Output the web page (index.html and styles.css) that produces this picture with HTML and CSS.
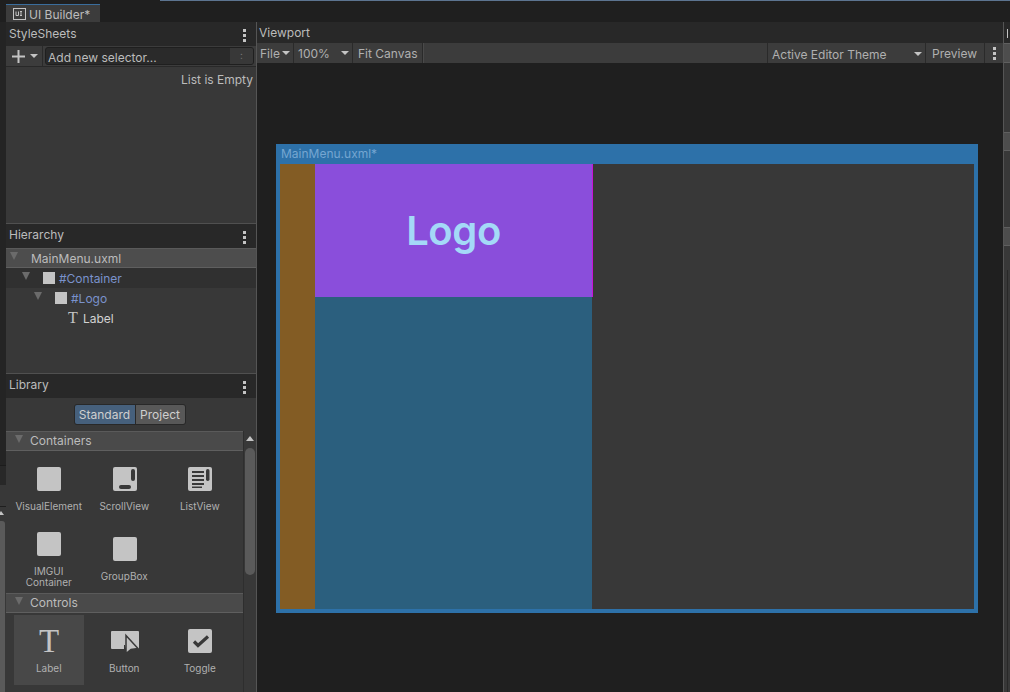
FILE: index.html
```html
<!DOCTYPE html>
<html lang="en">
<head>
<meta charset="utf-8">
<title>UI Builder</title>
<link rel="stylesheet" href="styles.css">
</head>
<body>
<div class="app">
  <div class="titlebar">
    <div class="tab">
      <svg class="tab-icon" width="13" height="12" viewBox="0 0 13 12"><rect x="0.5" y="0.5" width="12" height="11" fill="none" stroke="#c4c4c4"/><path d="M3 3.500V7.500H5.500V3.500M8 3.500V7.500M7 3.500H9M7 7.500H9" fill="none" stroke="#c4c4c4"/></svg>
      <span>UI Builder*</span>
    </div>
    <div class="top-line"></div>
  </div>
  <div class="main">
    <div class="strip">
      <div class="strip-a"></div>
      <div class="strip-b"></div>
      <div class="strip-c"></div>
      <div class="strip-d"><span class="strip-arrow"></span><span class="strip-thumb"></span></div>
    </div>
    <div class="left">
      <div class="panel-head">
        <span>StyleSheets</span>
        <svg class="kebab" width="3" height="13" viewBox="0 0 3 13"><path d="M0 0h3v3H0zM0 5h3v3H0zM0 10h3v3H0z" fill="#c4c4c4"/></svg>
      </div>
      <div class="sheet-bar">
        <div class="add-btn">
          <svg width="13" height="13" viewBox="0 0 13 13"><path d="M5.500 0h2v5.500H13v2H7.500V13h-2V7.500H0v-2h5.500z" fill="#c4c4c4"/></svg>
          <span class="caret"></span>
        </div>
        <div class="selector">
          <span class="selector-text">Add new selector...</span>
          <span class="selector-end">:</span>
        </div>
      </div>
      <div class="sheet-body"><span>List is Empty</span></div>

      <div class="panel-head panel-head-line">
        <span>Hierarchy</span>
        <svg class="kebab" width="3" height="13" viewBox="0 0 3 13"><path d="M0 0h3v3H0zM0 5h3v3H0zM0 10h3v3H0z" fill="#c4c4c4"/></svg>
      </div>
      <div class="tree">
        <div class="tree-root"><span class="tri tri-root"></span><span class="root-name">MainMenu.uxml</span></div>
        <div class="tree-row tree-row-dark tree-l1"><span class="tri"></span><span class="sq"></span><span class="sel-name">#Container</span></div>
        <div class="tree-row tree-l2"><span class="tri"></span><span class="sq"></span><span class="sel-name">#Logo</span></div>
        <div class="tree-row tree-l3"><span class="t-small">T</span><span class="label-name">Label</span></div>
      </div>

      <div class="panel-head panel-head-line">
        <span>Library</span>
        <svg class="kebab" width="3" height="13" viewBox="0 0 3 13"><path d="M0 0h3v3H0zM0 5h3v3H0zM0 10h3v3H0z" fill="#c4c4c4"/></svg>
      </div>
      <div class="lib-tabs">
        <div class="seg">
          <span class="seg-on">Standard</span>
          <span class="seg-off">Project</span>
        </div>
      </div>
      <div class="lib-scroll">
        <div class="lib-content">
          <div class="cat"><span class="tri tri-cat"></span><span>Containers</span></div>
          <div class="grid">
            <div class="item"><svg class="ico" width="24" height="24" viewBox="0 0 24 24"><rect width="24" height="24" rx="2" fill="#c4c4c4"/></svg><span class="cap">VisualElement</span></div>
            <div class="item"><svg class="ico" width="24" height="24" viewBox="0 0 24 24"><rect width="24" height="24" rx="2" fill="#c4c4c4"/><rect x="18" y="2" width="4" height="12" rx="2" fill="#383838"/><rect x="6" y="18" width="12" height="4" rx="2" fill="#383838"/></svg><span class="cap">ScrollView</span></div>
            <div class="item"><svg class="ico" width="24" height="24" viewBox="0 0 24 24"><rect width="24" height="24" rx="2" fill="#c4c4c4"/><path d="M4 4h12v2H4zM4 8h12v2H4zM4 12h12v2H4zM4 16h12v2H4zM4 19.500h10v1.500H4z" fill="#383838"/><rect x="18" y="2" width="3.500" height="12" rx="1.700" fill="#383838"/></svg><span class="cap">ListView</span></div>
            <div class="item"><svg class="ico" width="24" height="24" viewBox="0 0 24 24"><rect width="24" height="24" rx="2" fill="#c4c4c4"/></svg><span class="cap">IMGUI<br>Container</span></div>
            <div class="item"><svg class="ico" width="24" height="24" viewBox="0 0 24 24"><rect width="24" height="24" rx="2" fill="#c4c4c4"/></svg><span class="cap">GroupBox</span></div>
          </div>
          <div class="cat"><span class="tri tri-cat"></span><span>Controls</span></div>
          <div class="grid">
            <div class="item item-on"><span class="t-big">T</span><span class="cap">Label</span></div>
            <div class="item"><svg class="ico" width="28" height="24" viewBox="0 0 28 24"><path d="M1 2h26a1 1 0 0 1 1 1v17h-13l-1-4-1 0v4H1a1 1 0 0 1-1-1V3a1 1 0 0 1 1-1z" fill="#c4c4c4"/><path d="M15 6.500 27 19.500l-7 1-5 4z" fill="#c4c4c4" stroke="#383838" stroke-width="1.500"/></svg><span class="cap">Button</span></div>
            <div class="item"><svg class="ico" width="24" height="24" viewBox="0 0 24 24"><rect width="24" height="24" rx="2" fill="#c4c4c4"/><path d="M6 12.500 10 16.500 20 7.500" fill="none" stroke="#383838" stroke-width="3.200"/></svg><span class="cap">Toggle</span></div>
          </div>
        </div>
        <div class="scrollbar">
          <span class="scroll-up"></span>
          <span class="scroll-thumb"></span>
        </div>
      </div>
    </div>
    <div class="viewport">
      <div class="view-head">Viewport</div>
      <div class="view-bar">
        <div class="btn btn-file"><span>File</span><span class="caret"></span></div>
        <div class="btn btn-zoom"><span>100%</span><span class="caret"></span></div>
        <div class="btn btn-fit">Fit Canvas</div>
        <div class="bar-fill"></div>
        <div class="btn btn-theme"><span>Active Editor Theme</span><span class="caret"></span></div>
        <div class="btn btn-preview">Preview</div>
        <div class="btn btn-more">
          <svg width="3" height="13" viewBox="0 0 3 13"><path d="M0 0h3v3H0zM0 5h3v3H0zM0 10h3v3H0z" fill="#c4c4c4"/></svg>
        </div>
      </div>
      <div class="canvas">
        <div class="doc">
          <div class="doc-title">MainMenu.uxml*</div>
          <div class="doc-body">
            <div class="col-brown"></div>
            <div class="col-blue">
              <div class="logo">Logo</div>
            </div>
          </div>
        </div>
      </div>
    </div>
    <div class="right">
      <div class="right-head"><span class="right-i"></span></div>
      <div class="right-sec right-sec-a"></div>
      <div class="right-body right-body-a"></div>
      <div class="right-sec"></div>
      <div class="right-body right-body-b"></div>
      <div class="right-sec"></div>
      <div class="right-body right-body-c"><span class="right-inner"></span></div>
    </div>
  </div>
</div>
</body>
</html>
```

FILE: styles.css
```css
* { box-sizing: border-box; }
html, body { margin: 0; padding: 0; }
body {
  width: 1010px;
  height: 692px;
  overflow: hidden;
  background: #1f1f1f;
  font-family: Inter, "Liberation Sans", sans-serif;
  font-size: 12px;
  color: #bcbcbc;
}
.app { width: 1010px; height: 692px; display: flex; flex-direction: column; }

.titlebar { height: 22px; flex: none; display: flex; background: #1f1f1f; position: relative; }
.tab {
  margin: 4px 0 0 6px;
  width: 94px;
  height: 18px;
  background: #3c3c3c;
  border-top: 1px solid #3a6d9c;
  display: flex;
  align-items: center;
  padding: 2px 0 0 7px;
  gap: 3px;
}
.tab-icon { flex: none; margin-top: -1px; }
.top-line { position: absolute; left: 160px; right: 0; top: 0; height: 1px; background: #5c7490; }

.main { flex: 1; display: flex; min-height: 0; }

.strip { width: 6px; flex: none; display: flex; flex-direction: column; background: #252525; }
.strip-a { height: 443px; flex: none; background: #242424; }
.strip-b { height: 20px; flex: none; background: #282828; border-top: 1px solid #1c1c1c; }
.strip-c { height: 21px; flex: none; background: #383838; }
.strip-d { flex: 1; background: #383838; border-top: 1px solid #1f1f1f; display: flex; flex-direction: column; }
.strip-arrow { width: 0; height: 0; margin: 4px 0 0 -2px; border: 3px solid transparent; border-top: 0; border-bottom: 4px solid #c4c4c4; }
.strip-thumb { flex: 1; margin-top: 6px; width: 5px; background: #5a5a5a; border-radius: 0 3px 0 0; }

.left { width: 250px; flex: none; display: flex; flex-direction: column; background: #383838; }
.panel-head {
  height: 24px;
  flex: none;
  display: flex;
  align-items: center;
  justify-content: space-between;
  padding: 0 10px 2px 3px;
  background: #282828;
}
.panel-head-line { height: 25px; border-top: 1px solid #505050; padding-bottom: 3px; }
.kebab { flex: none; margin-top: 5px; }

.sheet-bar { height: 21px; flex: none; display: flex; background: #3c3c3c; border-bottom: 1px solid #282828; }
.add-btn { width: 37px; flex: none; display: flex; align-items: center; gap: 5px; padding-left: 6px; border-right: 1px solid #2a2a2a; }
.caret { width: 0; height: 0; flex: none; border: 4px solid transparent; border-bottom: 0; border-top: 4px solid #c4c4c4; }
.selector {
  flex: 1;
  margin: 1px 2px 1px 2px;
  border: 1px solid #1f1f1f;
  border-radius: 3px;
  background: #2a2a2a;
  display: flex;
  align-items: center;
  justify-content: space-between;
  padding-left: 2px;
  overflow: hidden;
}
.selector-text { margin-top: 2px; }
.selector-end { width: 23px; height: 100%; background: #383838; color: #777; font-size: 10px; text-align: center; line-height: 15px; }
.sheet-body { height: 156px; flex: none; text-align: right; padding: 6px 3px 0 0; background: #383838; }
.sheet-body span { display: block; line-height: 14px; }

.tree { height: 125px; flex: none; background: #383838; }
.tree-root {
  height: 20px;
  display: flex;
  align-items: center;
  background: #4d4d4d;
  border-top: 1px solid #5a5a5a;
  border-bottom: 1px solid #5f5f5f;
}
.tri { width: 0; height: 0; flex: none; border-style: solid; border-color: #6b6b6b transparent transparent; border-width: 8px 4.500px 0; }
.tri-root { margin: -4px 0 0 4px; }
.root-name { margin-left: 13px; }
.tree-row { height: 20px; display: flex; align-items: center; }
.tree-row-dark { background: #303030; }
.tree-row .tri { margin-top: -4px; }
.tree-l1 { padding-left: 16px; }
.tree-l2 { padding-left: 28px; }
.tree-l3 { padding-left: 62px; }
.sq { width: 12px; height: 12px; flex: none; background: #c4c4c4; margin-left: 13px; }
.sel-name { margin-left: 4px; color: #7a92cc; }
.t-small { font-family: "Liberation Serif", serif; font-size: 16px; color: #c4c4c4; width: 15px; line-height: 20px; }
.label-name { color: #d2d2d2; }

.lib-tabs { height: 33px; flex: none; display: flex; justify-content: center; align-items: center; background: #383838; padding-right: 3px; }
.seg { display: flex; height: 21px; border: 1px solid #282828; border-radius: 3px; overflow: hidden; line-height: 19px; background: #282828; }
.seg-on { width: 60px; background: #46607c; color: #cfcfcf; text-align: center; }
.seg-off { width: 49px; margin-left: 1px; background: #585858; color: #cfcfcf; text-align: center; }

.lib-scroll { flex: 1; min-height: 0; display: flex; overflow: hidden; }
.lib-content { width: 237px; flex: none; }
.cat {
  height: 20px;
  display: flex;
  align-items: center;
  gap: 7px;
  padding: 0 0 2px 9px;
  background: #4a4a4a;
  border-top: 1px solid #5a5a5a;
  border-bottom: 1px solid #5f5f5f;
}
.tri-cat { margin-top: -2px; }
.grid { display: grid; grid-template-columns: 70px 70px 70px; column-gap: 5.5px; grid-auto-rows: 70px; padding: 2px 0 0 8px; }
.item { display: flex; flex-direction: column; align-items: center; justify-content: center; gap: 10px; padding-top: 3px; }
.item-on { background: #484848; }
.ico { flex: none; }
.cap { font-size: 10px; line-height: 11px; text-align: center; color: #b0b0b0; margin-left: -0.5px; }
.t-big { font-family: "Liberation Serif", serif; font-size: 33px; line-height: 24px; height: 24px; color: #c4c4c4; }

.scrollbar { width: 13px; flex: none; display: flex; flex-direction: column; align-items: center; border-left: 1px solid #2e2e2e; padding-top: 5px; }
.scroll-up { width: 0; height: 0; border: 4px solid transparent; border-top: 0; border-bottom: 5px solid #c4c4c4; }
.scroll-thumb { width: 10px; height: 127px; margin-top: 7px; background: #5a5a5a; border-radius: 5px; }

.viewport { width: 748px; flex: none; display: flex; flex-direction: column; border-left: 1px solid #555; border-right: 1px solid #555; background: #1f1f1f; }
.view-head { height: 21px; flex: none; background: #282828; padding: 4px 0 0 2px; line-height: 14px; }
.view-bar { height: 20px; flex: none; display: flex; background: #3c3c3c; color: #b0b0b0; }
.btn { height: 20px; display: flex; align-items: center; flex: none; background: #3c3c3c; border-right: 1px solid #2a2a2a; }
.btn-file { width: 37px; padding-left: 3px; gap: 2px; }
.btn-zoom { width: 59px; padding: 0 3px 0 4px; justify-content: space-between; }
.btn-fit { width: 70px; padding-left: 5px; }
.bar-fill { flex: 1; border-left: 1px solid #4a4a4a; border-right: 1px solid #2a2a2a; }
.btn-theme { width: 158px; padding: 2px 3px 0 4px; justify-content: space-between; }
.btn-preview { width: 59px; padding-left: 6px; }
.btn-more { width: 18px; justify-content: center; border-right: 0; }

.canvas { flex: 1; min-height: 0; padding: 81px 0 0 19px; }
.doc { width: 702px; height: 469px; background: #2d71a9; padding: 0 4px 4px; display: flex; flex-direction: column; }
.doc-title { height: 20px; flex: none; color: #75a6d1; padding: 3px 0 0 1px; line-height: 14px; }
.doc-body { flex: 1; display: flex; background: #383838; min-height: 0; }
.col-brown { width: 35px; flex: none; background: #835c24; }
.col-blue { width: 277px; flex: none; background: #2b5f7e; }
.logo {
  width: 278px;
  height: 133px;
  background: #8a4edb;
  border-right: 1px solid #c814d8;
  display: flex;
  align-items: center;
  justify-content: center;
  font-size: 40px;
  font-weight: 600;
  letter-spacing: -0.4px;
  color: #a4d9f7;
}

.right { flex: 1; min-width: 0; display: flex; flex-direction: column; background: #383838; }
.right-head { height: 21px; flex: none; background: #282828; padding: 7px 0 0 3px; }
.right-i { display: block; width: 1px; height: 9px; background: #c4c4c4; }
.right-sec { height: 19px; flex: none; background: #4d4d4d; border-top: 1px solid #5f5f5f; border-bottom: 1px solid #5f5f5f; }
.right-sec-a { height: 20px; }
.right-body-a { height: 69px; flex: none; }
.right-body-b { height: 76px; flex: none; }
.right-body-c { flex: 1; padding: 24px 0 0 3px; }
.right-inner { display: block; height: 100%; border-left: 1px solid #282828; }
```
